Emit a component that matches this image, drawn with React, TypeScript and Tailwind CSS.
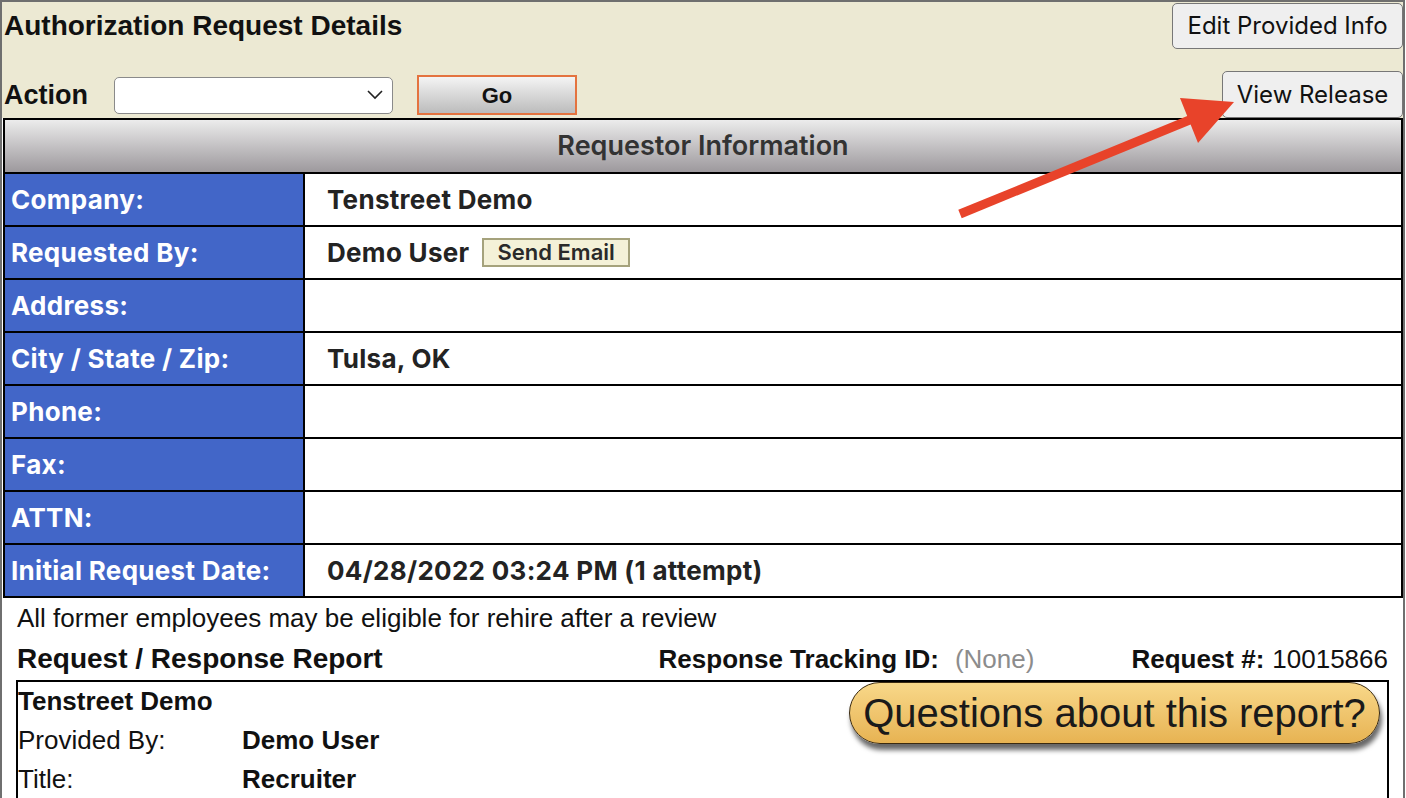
import React from "react";

const rows: { label: string; value?: React.ReactNode }[] = [
  { label: "Company:", value: "Tenstreet Demo" },
  { label: "Requested By:", value: "__email" },
  { label: "Address:" },
  { label: "City / State / Zip:", value: "Tulsa, OK" },
  { label: "Phone:" },
  { label: "Fax:" },
  { label: "ATTN:" },
  { label: "Initial Request Date:", value: "04/28/2022 03:24 PM (1 attempt)" },
];

export default function App() {
  const arial = { fontFamily: '"Liberation Sans", Arial, sans-serif' };
  return (
    <div className="relative w-[1406px] h-[798px] overflow-hidden bg-white">
      <div className="w-[1405px] h-[798px] border-t-2 border-x-2 border-[#6f6f6f] flex flex-col">
        {/* Top beige area */}
        <div className="h-[116px] bg-[#ece9d3] flex justify-between shrink-0">
          <div className="pl-[2px] pt-[9px]">
            <div className="text-[28px] leading-[30px] font-bold text-[#111]" style={arial}>
              Authorization Request Details
            </div>
            <div className="mt-[34px] flex items-center h-[40px]">
              <div className="text-[27px] leading-[30px] font-bold text-[#111] w-[110px]" style={arial}>
                Action
              </div>
              <div className="w-[279px] h-[37px] rounded-[5px] border-[1.5px] border-[#8a8a8a] bg-white flex items-center justify-end pr-[8px]">
                <svg width="18" height="12" viewBox="0 0 18 12">
                  <path d="M2 2 L9 9 L16 2" fill="none" stroke="#222" strokeWidth="1.6" />
                </svg>
              </div>
              <div
                className="ml-[24px] w-[160px] h-[40px] border-2 border-[#e4733f] bg-gradient-to-b from-[#f4f4f4] to-[#bcbcbc] flex items-center justify-center text-[22px] font-bold text-[#111]"
                style={arial}
              >
                Go
              </div>
            </div>
          </div>
          <div className="flex flex-col items-end pt-[1px]" style={{ fontFamily: "Inter, sans-serif" }}>
            <div className="w-[231px] h-[46px] rounded-[5px] border-[1.5px] border-[#777] bg-[#efefef] flex items-center justify-center text-[24px] text-[#111]">
              Edit Provided Info
            </div>
            <div className="mt-[22px] w-[181px] h-[47px] rounded-[5px] border-[1.5px] border-[#777] bg-[#efefef] flex items-center justify-center text-[24px] text-[#111]">
              View Release
            </div>
          </div>
        </div>

        {/* Requestor table */}
        <div
          className="ml-[1px] border-2 border-black bg-white shrink-0"
          style={{ fontFamily: "Inter, sans-serif" }}
        >
          <div className="h-[52px] bg-gradient-to-b from-[#ececec] to-[#9d999d] flex items-center justify-center text-[27px] font-semibold text-[#333]">
            Requestor Information
          </div>
          {rows.map((r) => (
            <div key={r.label} className="border-t-2 border-black h-[53px] flex">
              <div className="w-[300px] bg-[#4266c8] text-white text-[26px] tracking-[0.3px] font-bold flex items-center pl-[6px] border-r-2 border-black shrink-0">
                {r.label}
              </div>
              <div className="flex-1 flex items-center pl-[22px] text-[26px] tracking-[0.3px] font-bold text-[#232323]">
                {r.value === "__email" ? (
                  <>
                    <span>Demo User</span>
                    <span className="ml-[13px] h-[29px] px-[13px] border-2 border-[#a5a27c] bg-[#f4f1d8] text-[22px] tracking-normal font-semibold text-[#2a2a2a] flex items-center">
                      Send Email
                    </span>
                  </>
                ) : (
                  r.value
                )}
              </div>
            </div>
          ))}
        </div>

        {/* Bottom white area */}
        <div className="flex-1 bg-white" style={arial}>
          <div className="pl-[15px] pt-[6px] text-[26px] leading-[28px] text-[#111]">
            All former employees may be eligible for rehire after a review
          </div>
          <div className="mt-[12px] px-[15px] flex items-center h-[30px] text-[26px] text-[#111]">
            <div className="font-bold flex-1 text-[28px]">Request / Response Report</div>
            <div className="font-bold">Response Tracking ID:</div>
            <div className="ml-[16px] text-[#8c8c8c]">(None)</div>
            <div className="ml-[97px] font-bold">Request #:</div>
            <div className="ml-[8px]">10015866</div>
          </div>
          <div className="mt-[6px] mx-[14px] border-2 border-black border-b-0 h-[140px] flex justify-between text-[26px] text-[#111]">
            <div>
              <div className="h-[39px] leading-[39px] font-bold">Tenstreet Demo</div>
              <div className="h-[39px] leading-[39px] flex">
                <span className="w-[224px]">Provided By:</span>
                <span className="font-bold">Demo User</span>
              </div>
              <div className="h-[39px] leading-[39px] flex">
                <span className="w-[224px]">Title:</span>
                <span className="font-bold">Recruiter</span>
              </div>
            </div>
            <div className="mr-[7px] mt-0">
              <div className="w-[531px] h-[62px] rounded-full border-[1.5px] border-[#3a2a10] bg-gradient-to-b from-[#f8d889] to-[#e7b352] shadow-[2px_6px_5px_rgba(0,0,0,0.6)] flex items-center justify-center text-[40px] text-[#1a1a1a]">
                Questions about this report?
              </div>
            </div>
          </div>
        </div>
      </div>

      {/* Red annotation arrow */}
      <svg className="absolute left-0 top-0 pointer-events-none" width="1406" height="798">
        <line x1="960" y1="214" x2="1192" y2="119" stroke="#e8432a" strokeWidth="9" />
        <polygon points="1180,98 1234,102 1198,143" fill="#e8432a" />
      </svg>
    </div>
  );
}
